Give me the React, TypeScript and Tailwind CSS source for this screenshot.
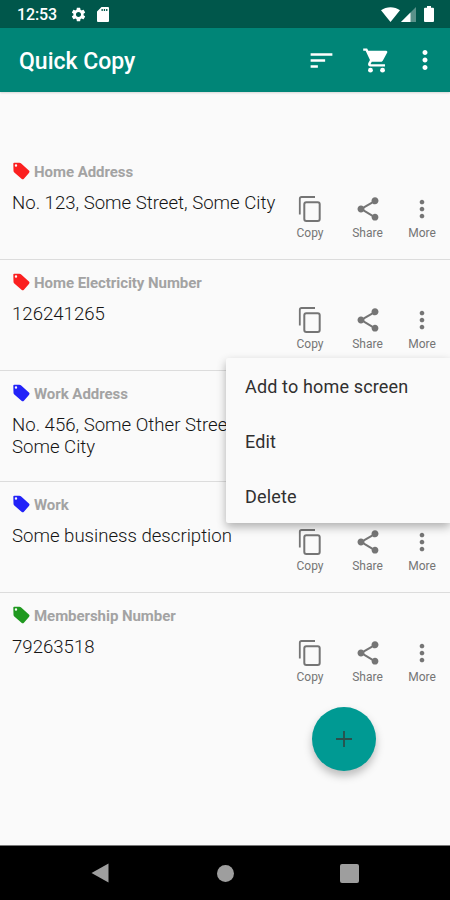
import React from 'react'
import { MdMoreVert, MdSettings, MdShare, MdSort } from 'react-icons/md'

const items = [
  { id: 1, label: "Home Address", lines: ["No. 123, Some Street, Some City"], color: "text-[#fb2020]" },
  { id: 2, label: "Home Electricity Number", lines: ["126241265"], color: "text-[#fb2020]" },
  { id: 3, label: "Work Address", lines: ["No. 456, Some Other Street,", "Some City"], color: "text-[#2222f8]" },
  { id: 4, label: "Work", lines: ["Some business description"], color: "text-[#2222f8]" },
  { id: 5, label: "Membership Number", lines: ["79263518"], color: "text-[#1f991f]" },
]

const menuItems = ["Add to home screen", "Edit", "Delete"]

const TagIcon = ({ className }: { className: string }) => (
  <svg viewBox="0 0 18 18" className={`h-[18px] w-[18px] ${className}`} fill="currentColor">
    <path
      fillRule="evenodd"
      d="M2.2.7h5.2c.6 0 1.100.2 1.500.6l8 7.300c.8.8.8 1.600 0 2.400l-5 5.700c-.8.8-1.600.8-2.400 0L2.300 10.600C1.800 10.100 1.600 9.600 1.500 9L1.300 1.700c0-.6.300-1 .9-1zM4 2.300a1.200 1.200 0 1 0 0 2.400 1.200 1.200 0 0 0 0-2.400z"
    />
  </svg>
)

const CopyIcon = ({ className }: { className: string }) => (
  <svg viewBox="0 0 28 28" className={className} fill="none" stroke="currentColor">
    <path d="M3.800 19.500V3.800a1.800 1.800 0 0 1 1.800-1.800H19" strokeWidth="1.800" />
    <rect x="8.300" y="7.200" width="15.400" height="18.800" rx="2" strokeWidth="2" />
  </svg>
)

const CartIcon = ({ className }: { className: string }) => (
  <svg viewBox="0 0 24 24" className={className} fill="currentColor">
    <circle cx="7" cy="20" r="2" />
    <circle cx="17" cy="20" r="2" />
    <path d="M1 2v2h2l3.600 7.590-1.350 2.450C4.520 15.370 5.480 17 7 17h12v-2H7.420a.25.25 0 0 1-.22-.37L8.100 13h7.450c.75 0 1.410-.41 1.750-1.030l3.580-6.490A1 1 0 0 0 20 4H5.210l-.94-2H1z" />
  </svg>
)

const StatusBar = () => (
  <div className="flex h-7 items-center justify-between bg-[#00574b] pl-[17px] pr-4 text-white">
    <div className="flex items-center">
      <span className="w-[53px] pt-0.5 text-base font-medium leading-7 tracking-[-0.1px]">12:53</span>
      <MdSettings className="mt-px h-[17px] w-[17px]" />
      <svg viewBox="0 0 12 15" className="ml-2.5 mt-px h-[15px] w-3" fill="currentColor" fillRule="evenodd">
        <path d="M4.500 0H11a1 1 0 0 1 1 1v13a1 1 0 0 1-1 1H1a1 1 0 0 1-1-1V4.500zM4.500 2v2h1.300V2zm2.300 0v2h1.300V2zm2.300 0v2h1.300V2z" />
      </svg>
    </div>
    <div className="flex items-center">
      <svg viewBox="0 0 19 15" className="h-[15px] w-[19px]" fill="currentColor">
        <path d="M0 3.200C5.500-.9 13.500-.9 19 3.200L9.500 15z" />
      </svg>
      <svg viewBox="0 0 15 15" className="ml-px h-[15px] w-[15px]" fill="currentColor">
        <path d="M0 15L15 0v15z" opacity=".35" />
        <path d="M0 15l9.500-9.500V15z" />
      </svg>
      <svg viewBox="0 0 10 16" className="ml-2 h-4 w-2.5" fill="currentColor">
        <path d="M3 0h4v1.700h2a1 1 0 0 1 1 1V15a1 1 0 0 1-1 1H1a1 1 0 0 1-1-1V2.700a1 1 0 0 1 1-1h2z" />
      </svg>
    </div>
  </div>
)

const Toolbar = () => (
  <header className="flex h-16 items-center bg-[#008577] pl-[19px] text-white shadow-[0_1px_2px_rgba(0,0,0,0.15)]">
    <h1 className="flex-1 pt-1 text-[23px] font-medium leading-7">Quick Copy</h1>
    <MdSort className="mr-[26px] h-[29px] w-[29px]" />
    <CartIcon className="mr-[19px] h-[29px] w-[29px]" />
    <MdMoreVert className="mr-[10px] h-[30px] w-[30px]" />
  </header>
)

const actions = [
  { name: "Copy", icon: CopyIcon, width: "w-[62px]" },
  { name: "Share", icon: MdShare, width: "w-[53px]" },
  { name: "More", icon: MdMoreVert, width: "w-[56px]" },
]

const App = () => {
  return (
    <div className="relative flex h-[900px] w-[450px] flex-col overflow-hidden bg-[#fafafa] font-[Roboto,sans-serif]">
      <StatusBar />
      <Toolbar />
      <main className="flex-1 pt-[57px]">
        {items.map((item) => (
          <div key={item.id} className="flex h-[111px] border-b border-[#dcdcdc] pl-3 last:border-b-0">
            <div className="min-w-0 flex-1 pt-3">
              <div className="flex h-[20px] items-center gap-1">
                <TagIcon className={item.color} />
                <span className="whitespace-nowrap pt-0.5 text-[15px] font-bold leading-5 tracking-[-0.05px] text-[#a3a3a3]">{item.label}</span>
              </div>
              <div className="mt-[11px] text-[18.600px] font-light leading-[22px] text-[#151515]">
                {item.lines.map((line) => (
                  <p key={line} className="whitespace-nowrap">{line}</p>
                ))}
              </div>
            </div>
            <div className="flex shrink-0 pt-[46px] text-[#757575]">
              {actions.map(({ name, icon: Icon, width }) => (
                <div key={name} className={`flex flex-col items-center ${width}`}>
                  <Icon className="h-7 w-7" />
                  <span className="mt-0.5 text-[12px] leading-4">{name}</span>
                </div>
              ))}
            </div>
          </div>
        ))}
      </main>
      <nav className="flex h-[55px] items-center border-t border-[#777] bg-black text-[#9e9e9e]">
        <svg viewBox="0 0 18 20" className="ml-[91px] h-5 w-[18px]" fill="currentColor">
          <path d="M17.500.500v19L.500 10z" />
        </svg>
        <div className="ml-[108px] h-[17px] w-[17px] rounded-full bg-[#9e9e9e]" />
        <div className="ml-[106px] h-[19px] w-[19px] rounded-[2px] bg-[#9e9e9e]" />
      </nav>

      <div className="absolute right-0 top-[358px] w-[224px] rounded-l-[2px] bg-[#fafafa] shadow-[0_4px_10px_rgba(0,0,0,0.3)]">
        {menuItems.map((text) => (
          <div key={text} className="flex h-[55px] items-center pl-[19px] pt-px text-[18px] tracking-[0.15px] text-[#303030]">
            {text}
          </div>
        ))}
      </div>

      <button className="absolute left-[312px] top-[707px] flex h-16 w-16 items-center justify-center rounded-full bg-[#009a93] shadow-[0_5px_8px_rgba(0,0,0,0.25)]">
        <svg viewBox="0 0 16 16" className="h-4 w-4" stroke="#2b4f4b" strokeWidth="1.800">
          <path d="M8 0v16M0 8h16" />
        </svg>
      </button>
    </div>
  )
}

export default App
